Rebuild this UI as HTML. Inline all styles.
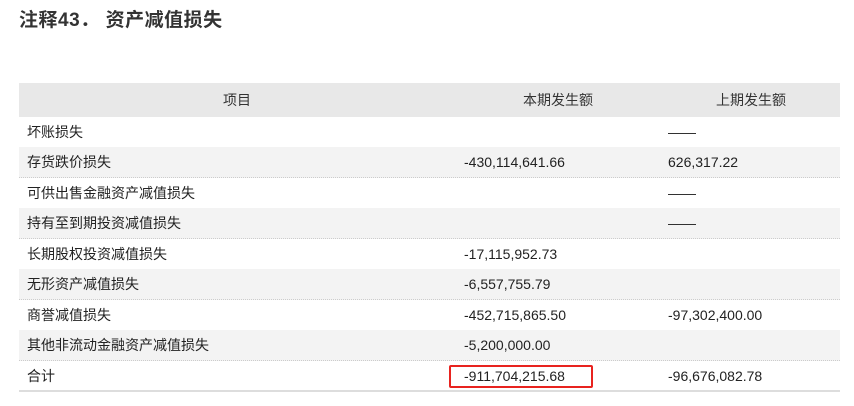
<!DOCTYPE html>
<html><head><meta charset="utf-8"><style>
body{margin:0;background:#fff;font-family:"Liberation Sans","Noto Sans CJK SC",sans-serif;color:#222;width:854px;height:406px;overflow:hidden;position:relative}
h1{position:absolute;left:19px;top:7px;margin:0;font-size:19px;font-weight:bold;color:#333;line-height:28px;letter-spacing:0.5px;white-space:nowrap}
.hd{position:absolute;left:19px;top:83px;width:821px;height:34px;background:#e8e8e8;font-size:14px;color:#333;line-height:34px}
.r{position:absolute;left:19px;width:821px;height:30px;font-size:14px;line-height:30px;border-bottom:1px dotted #ccc}
.g{background:#f3f3f3}
.c1{position:absolute;left:8px}.c2{position:absolute;left:445px}.c3{position:absolute;left:649px}
.red{position:absolute;left:449px;top:365px;width:140px;height:19px;border:2px solid #e8231f;border-radius:2px}
</style></head><body>
<h1>注释43．<span style="margin-left:6px">资产减值损失</span></h1>
<div class="hd"><span style="position:absolute;left:204px">项目</span><span style="position:absolute;left:504px">本期发生额</span><span style="position:absolute;left:697px">上期发生额</span></div>
<div class="r" style="top:117px"><span class="c1">坏账损失</span><span class="c3">——</span></div>
<div class="r g" style="top:147px"><span class="c1">存货跌价损失</span><span class="c2">-430,114,641.66</span><span class="c3">626,317.22</span></div>
<div class="r" style="top:178px"><span class="c1">可供出售金融资产减值损失</span><span class="c3">——</span></div>
<div class="r g" style="top:208px"><span class="c1">持有至到期投资减值损失</span><span class="c3">——</span></div>
<div class="r" style="top:239px"><span class="c1">长期股权投资减值损失</span><span class="c2">-17,115,952.73</span></div>
<div class="r g" style="top:269px"><span class="c1">无形资产减值损失</span><span class="c2">-6,557,755.79</span></div>
<div class="r" style="top:300px"><span class="c1">商誉减值损失</span><span class="c2">-452,715,865.50</span><span class="c3">-97,302,400.00</span></div>
<div class="r g" style="top:330px"><span class="c1">其他非流动金融资产减值损失</span><span class="c2">-5,200,000.00</span></div>
<div class="r" style="top:361px;border-bottom:2px solid #ddd;height:29px"><span class="c1">合计</span><span class="c2">-911,704,215.68</span><span class="c3">-96,676,082.78</span></div>
<div class="red"></div>
</body></html>
